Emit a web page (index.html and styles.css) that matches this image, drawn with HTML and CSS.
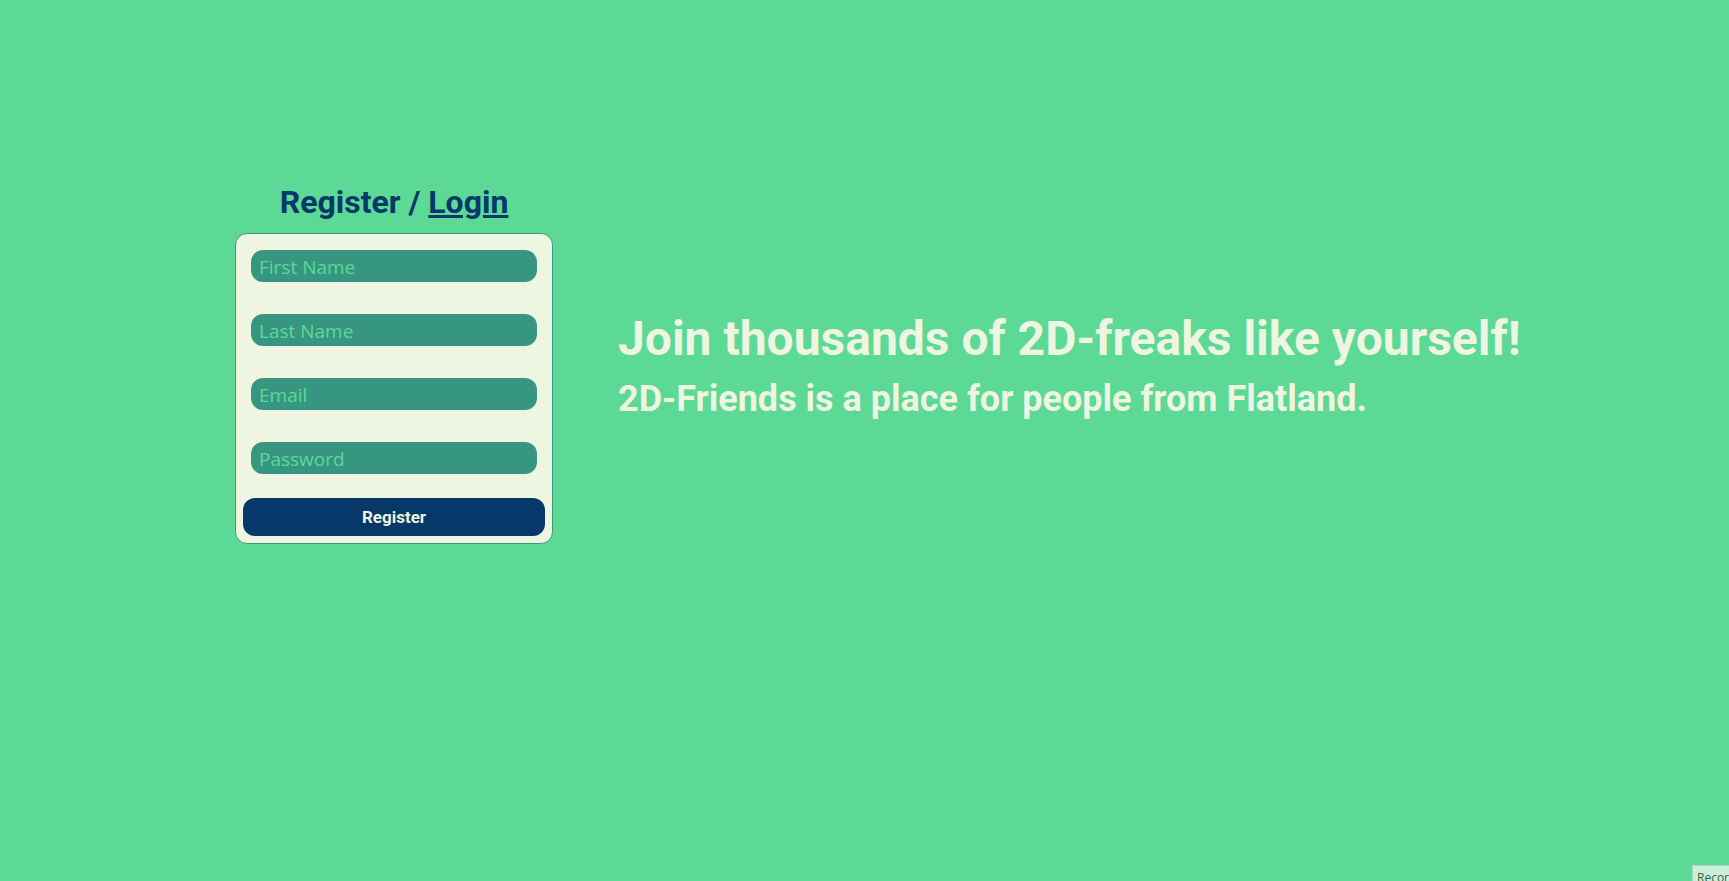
FILE: index.html
```html
<!DOCTYPE html>
<html lang="en">
<head>
<meta charset="utf-8">
<title>2D-Friends</title>
<link rel="stylesheet" href="styles.css">
</head>
<body>
<main class="page">
  <section class="auth">
    <h1 class="auth-title">Register / <a href="#" class="auth-link">Login</a></h1>
    <form class="card">
      <input class="field" type="text" placeholder="First Name">
      <input class="field" type="text" placeholder="Last Name">
      <input class="field" type="email" placeholder="Email">
      <input class="field field-last" type="password" placeholder="Password">
      <button class="submit" type="button">Register</button>
    </form>
  </section>
  <section class="pitch">
    <h2 class="pitch-title">Join thousands of 2D-freaks like yourself!</h2>
    <h3 class="pitch-sub">2D-Friends is a place for people from Flatland.</h3>
  </section>
</main>
<div class="rec-badge">Recording</div>
</body>
</html>
```

FILE: styles.css
```css
html, body {
  margin: 0;
  padding: 0;
  height: 100%;
}
body {
  background: #5cd995;
  font-family: Roboto, "Liberation Sans", sans-serif;
  overflow: hidden;
}
.page {
  display: flex;
  align-items: flex-start;
  padding: 183px 0 0 235px;
  gap: 65px;
}
.auth {
  display: flex;
  flex-direction: column;
  align-items: center;
  width: 318px;
}
.auth-title {
  margin: 0 0 12px;
  font-size: 32px;
  font-weight: 700;
  line-height: 38px;
  color: #06386a;
}
.auth-link {
  color: #06386a;
}
.card {
  box-sizing: border-box;
  width: 318px;
  display: flex;
  flex-direction: column;
  padding: 16px 7px 7px;
  background: #eef5e0;
  border: 1px solid #3a9a84;
  border-radius: 12px;
}
.field {
  box-sizing: border-box;
  height: 32px;
  margin: 0 8px 32px;
  padding: 2px 8px 0;
  border: none;
  outline: none;
  border-radius: 12px;
  background: #37967f;
  font-family: "Open Sans", "Noto Sans", sans-serif;
  font-size: 19px;
  color: #eef5e0;
}
.field::placeholder {
  color: #5cd995;
  opacity: 1;
}
.field-last {
  margin-bottom: 24px;
}
.submit {
  height: 38px;
  border: none;
  border-radius: 12px;
  background: #06386a;
  color: #eef5dc;
  font-family: Roboto, "Liberation Sans", sans-serif;
  font-weight: 700;
  font-size: 17px;
  cursor: pointer;
}
.pitch {
  color: #eef5e0;
  margin-top: 126px;
}
.pitch-title {
  margin: 0;
  font-size: 48px;
  font-weight: 700;
  line-height: 60px;
}
.pitch-sub {
  margin: 8px 0 0;
  font-size: 36px;
  font-weight: 700;
  line-height: 44px;
}
.rec-badge {
  position: fixed;
  left: 1692px;
  top: 865px;
  padding: 3px 4px;
  background: #c9f1d9;
  border: 1px solid #b5d6c2;
  font-family: "Open Sans", sans-serif;
  font-size: 12px;
  color: #3d5a4a;
  white-space: nowrap;
}
```
